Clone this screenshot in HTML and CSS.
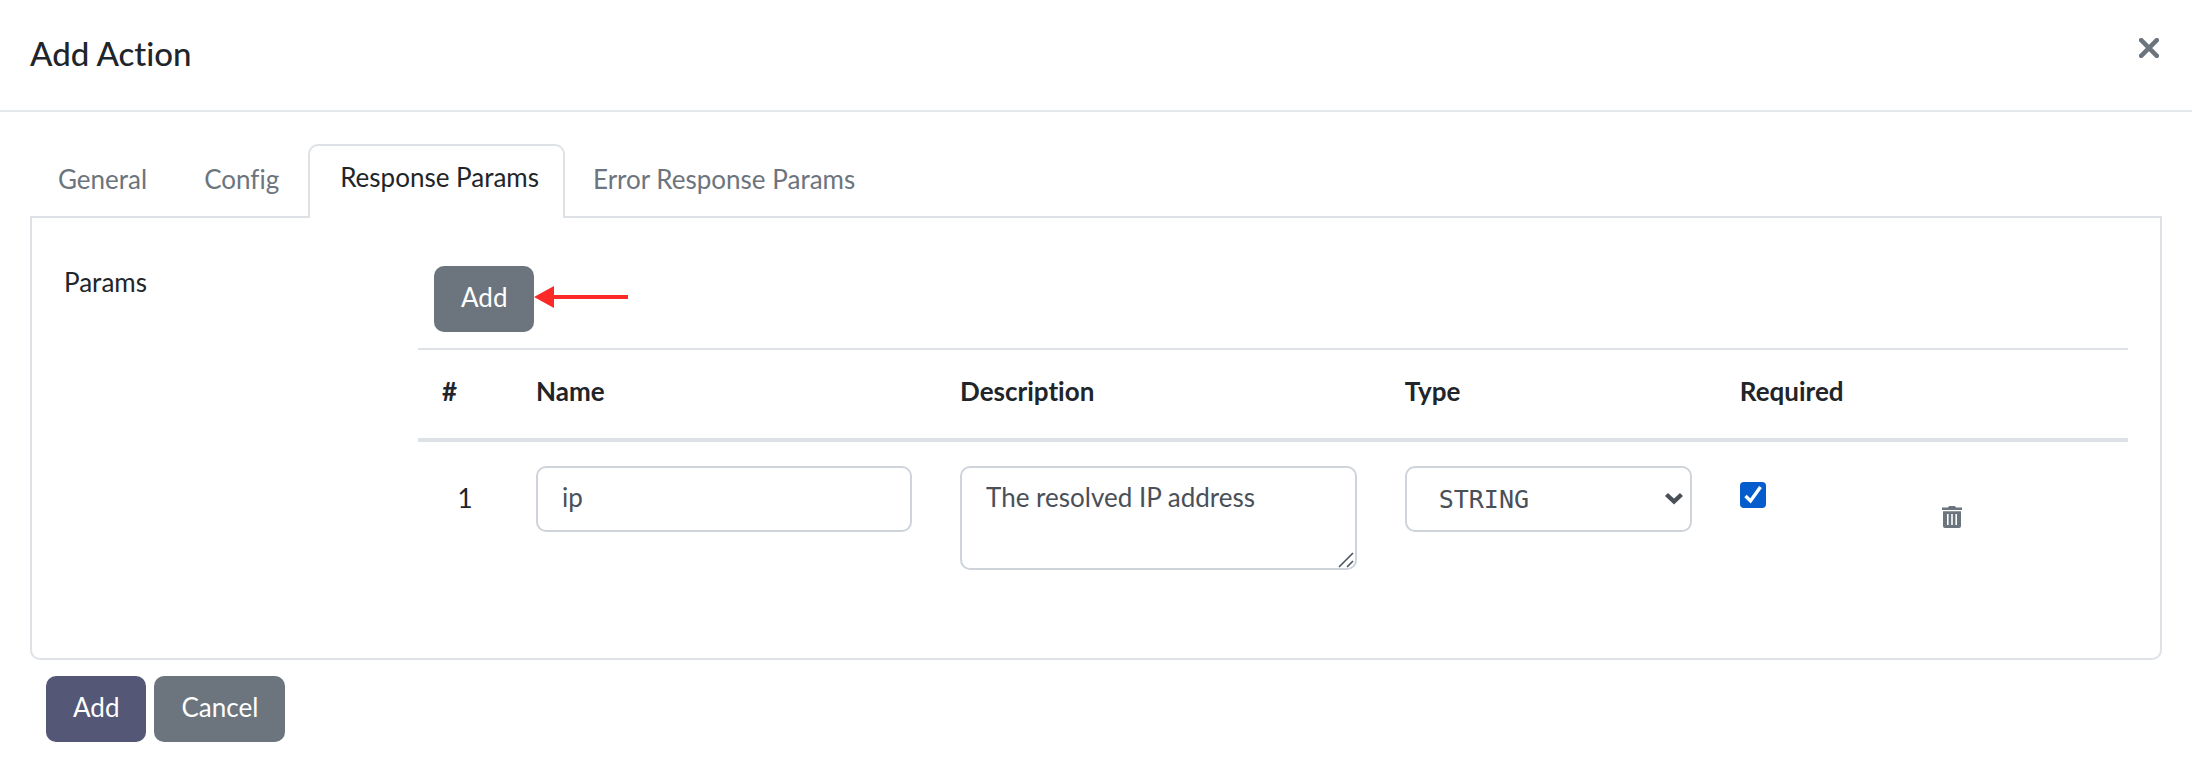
FILE: index.html
```html
<!DOCTYPE html>
<html lang="en">
<head>
<meta charset="utf-8">
<title>Add Action</title>
<link rel="stylesheet" href="styles.css">
</head>
<body>
<main class="dialog">
  <header class="dialog-header">
    <h1 class="dialog-title">Add Action</h1>
    <button class="close" type="button" aria-label="Close">
      <svg width="20" height="20" viewBox="0 0 20 20"><path d="M2.2 2.2l15.6 15.6M17.8 2.2l-15.6 15.6" stroke="currentColor" stroke-width="4.6" stroke-linecap="round" fill="none"/></svg>
    </button>
  </header>
  <div class="dialog-body">
    <nav class="tabs">
      <a class="tab" href="#general">General</a>
      <a class="tab" href="#config">Config</a>
      <a class="tab tab-active" href="#response" aria-current="page">Response Params</a>
      <a class="tab" href="#error">Error Response Params</a>
    </nav>
    <section class="panel" id="response">
      <div class="panel-label">Params</div>
      <div class="panel-content">
        <div class="toolbar">
          <button class="btn btn-secondary" type="button">Add</button>
          <svg class="arrow" width="94" height="24" viewBox="0 0 94 24" aria-hidden="true"><path d="M0 12L20 1V10H94V14H20V23Z" fill="#fc2929"/></svg>
        </div>
        <table class="params">
          <colgroup>
            <col class="col-index"><col class="col-name"><col class="col-desc"><col class="col-type"><col class="col-required"><col>
          </colgroup>
          <thead>
            <tr>
              <th scope="col">#</th>
              <th scope="col">Name</th>
              <th scope="col">Description</th>
              <th scope="col">Type</th>
              <th scope="col">Required</th>
              <td></td>
            </tr>
          </thead>
          <tbody>
            <tr>
              <td class="index">1</td>
              <td><input class="control" type="text" value="ip" aria-label="Name"></td>
              <td>
                <div class="field">
                  <textarea class="control control-area" aria-label="Description">The resolved IP address</textarea>
                  <svg class="grip" width="16" height="16" viewBox="0 0 16 16" aria-hidden="true"><path d="M1 15L15 1M9 15L15 9" stroke="#4b5563" stroke-width="1.6" fill="none"/></svg>
                </div>
              </td>
              <td>
                <div class="field">
                  <select class="control control-select" aria-label="Type"><option>STRING</option></select>
                  <svg class="chevron" width="20" height="14" viewBox="0 0 20 14" aria-hidden="true"><path d="M2.5 2.5L10 9.5L17.5 2.5" stroke="#495057" stroke-width="4.4" fill="none"/></svg>
                </div>
              </td>
              <td>
                <div class="check">
                  <input class="check-input" type="checkbox" checked aria-label="Required">
                  <svg class="check-mark" width="26" height="26" viewBox="0 0 26 26" aria-hidden="true"><path d="M5.5 14L10.5 19L20.5 5" stroke="#fff" stroke-width="3.4" fill="none"/></svg>
                </div>
              </td>
              <td>
                <button class="trash" type="button" aria-label="Delete">
                  <svg width="20" height="22" viewBox="0 0 20 22"><path fill="currentColor" fill-rule="evenodd" d="M0 1.5H6L7 0H13L14 1.5H20V4H0ZM1 5.3H19V20Q19 22 17 22H3Q1 22 1 20ZM5 8V19H6.6V8ZM9.2 8V19H10.8V8ZM13.4 8V19H15V8Z"/></svg>
                </button>
              </td>
            </tr>
          </tbody>
        </table>
      </div>
    </section>
    <footer class="actions">
      <button class="btn btn-primary" type="button">Add</button>
      <button class="btn btn-secondary" type="button">Cancel</button>
    </footer>
  </div>
</main>
</body>
</html>
```
FILE: styles.css
```css
* {
  box-sizing: border-box;
}

body {
  margin: 0;
  background: #fff;
  color: #212529;
  font-family: Lato, "Open Sans", sans-serif;
  font-size: 26px;
  line-height: 34px;
  font-variant-ligatures: none;
}

button,
input,
textarea {
  font: inherit;
  font-variant-ligatures: none;
}

.dialog-header {
  display: flex;
  justify-content: space-between;
  align-items: flex-start;
  padding: 32px;
  padding-left: 30px;
  border-bottom: 2px solid #e5e8eb;
}

.dialog-title {
  margin: 0;
  padding-bottom: 4px;
  font-size: 33px;
  font-weight: 500;
  line-height: 42px;
}

.close {
  display: flex;
  padding: 6px 1px;
  border: 0;
  background: none;
  color: #6c757d;
}

.dialog-body {
  padding: 32px 30px;
}

.tabs {
  display: flex;
  align-items: stretch;
}

.tab {
  padding: 18px 29px 20px 28px;
  color: #6c757d;
  text-decoration: none;
}

.tab-active {
  padding: 14px 24px 24px 30px;
  border: 2px solid #dee2e6;
  border-bottom: 0;
  border-radius: 10px 10px 0 0;
  background: #fff;
  color: #212529;
  position: relative;
  margin-bottom: -2px;
}

.panel {
  display: flex;
  padding: 48px 32px 64px;
  border: 2px solid #dee2e6;
  border-radius: 0 0 10px 10px;
}

.panel-label {
  flex: 0 0 354px;
  line-height: 32px;
}

.panel-content {
  flex: 1;
}

.toolbar {
  display: flex;
  align-items: center;
  padding: 0 16px 16px;
}

.arrow {
  margin-bottom: 4px;
}

.btn {
  padding: 14px 27px 18px;
  border: 0;
  border-radius: 10px;
  color: #fff;
}

.btn-primary {
  background: #545775;
}

.btn-secondary {
  background: #6c757d;
}

.params {
  width: 100%;
  border-collapse: collapse;
  table-layout: fixed;
}

.col-index {
  width: 94px;
}

.col-name {
  width: 24.8%;
}

.col-desc {
  width: 26%;
}

.col-type {
  width: 19.6%;
}

.col-required {
  width: 10.3%;
}

.params th,
.params td {
  padding: 24px;
  border-top: 2px solid #dee2e6;
  text-align: left;
  vertical-align: top;
}

.params th {
  padding-bottom: 30px;
  font-weight: 700;
}

.params thead tr {
  border-bottom: 4px solid #dee2e6;
}

.params .index {
  padding-top: 39px;
  text-align: center;
}

.field {
  position: relative;
}

.control {
  display: block;
  width: 100%;
  height: 66px;
  padding: 12px 24px 16px;
  border: 2px solid #ced4da;
  border-radius: 10px;
  background: #fff;
  color: #495057;
}

.control-area {
  height: 104px;
  resize: none;
}

.control-select {
  padding: 12px 32px;
  font-family: "DejaVu Sans Mono", monospace;
  font-size: 25px;
  appearance: none;
}

.grip {
  position: absolute;
  right: 3px;
  bottom: 2px;
}

.chevron {
  position: absolute;
  right: 8px;
  top: 26px;
}

.check {
  position: relative;
  width: 26px;
  margin-top: 16px;
}

.check-input {
  display: block;
  width: 26px;
  height: 26px;
  margin: 0;
  border-radius: 4px;
  background: #055ccd;
  appearance: none;
}

.check-mark {
  position: absolute;
  inset: 0;
  pointer-events: none;
}

.trash {
  display: flex;
  padding: 40px 26px;
  border: 0;
  background: none;
  color: #6c757d;
}

.actions {
  display: flex;
  gap: 8px;
  padding: 16px;
}
```
